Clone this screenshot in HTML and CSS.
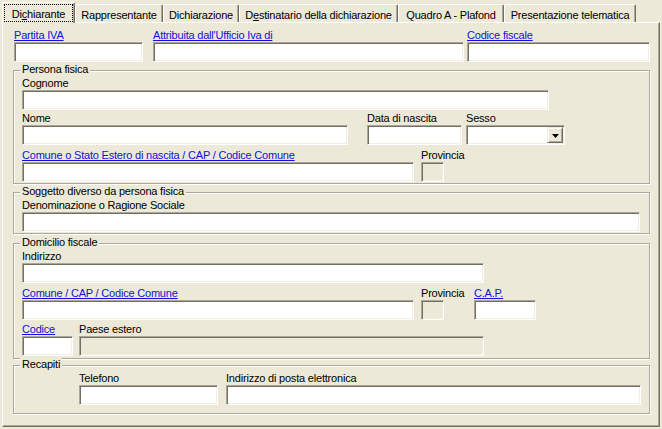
FILE: index.html
```html
<!DOCTYPE html>
<html lang="it">
<head>
<meta charset="utf-8">
<title>Dichiarante</title>
<link rel="stylesheet" href="styles.css">
</head>
<body>
<div class="tabs">
  <div class="tab sel t1"><span class="focus">Di<u>c</u>hiarante</span></div>
  <div class="tab t2">Rappresentante</div>
  <div class="tab t3">Dichiarazione</div>
  <div class="tab t4">D<u>e</u>stinatario della dichiarazione</div>
  <div class="tab t5">Quadro A - Plafond</div>
  <div class="tab t6">Presentazione telematica</div>
</div>
<div class="panel">
  <div class="row top-row">
    <div class="field w-piva"><span class="lbl link">Partita IVA</span><div class="inp"></div></div>
    <div class="field w-uff"><span class="lbl link">Attribuita dall'Ufficio Iva di</span><div class="inp"></div></div>
    <div class="field w-cf"><span class="lbl link">Codice fiscale</span><div class="inp"></div></div>
  </div>

  <div class="group g-pf">
    <span class="legend">Persona fisica</span>
    <div class="row">
      <div class="field w-cognome"><span class="lbl">Cognome</span><div class="inp"></div></div>
    </div>
    <div class="row gap1">
      <div class="field w-nome"><span class="lbl">Nome</span><div class="inp"></div></div>
      <div class="field w-data"><span class="lbl">Data di nascita</span><div class="inp"></div></div>
      <div class="field w-sesso"><span class="lbl">Sesso</span>
        <div class="inp combo"><span class="combo-btn"><svg width="7" height="4" viewBox="0 0 7 4"><polygon points="0,0 7,0 3.5,4" fill="#000"/></svg></span></div>
      </div>
    </div>
    <div class="row gap3">
      <div class="field w-comune"><span class="lbl link">Comune o Stato Estero di nascita / CAP / Codice Comune</span><div class="inp"></div></div>
      <div class="field w-prov"><span class="lbl">Provincia</span><div class="inp dis"></div></div>
    </div>
  </div>

  <div class="group g-sd">
    <span class="legend">Soggetto diverso da persona fisica</span>
    <div class="row">
      <div class="field w-den"><span class="lbl">Denominazione o Ragione Sociale</span><div class="inp"></div></div>
    </div>
  </div>

  <div class="group g-df">
    <span class="legend">Domicilio fiscale</span>
    <div class="row">
      <div class="field w-ind"><span class="lbl">Indirizzo</span><div class="inp"></div></div>
    </div>
    <div class="row gap3">
      <div class="field w-comune"><span class="lbl link">Comune / CAP / Codice Comune</span><div class="inp"></div></div>
      <div class="field w-prov"><span class="lbl">Provincia</span><div class="inp dis"></div></div>
      <div class="field w-cap"><span class="lbl link">C.A.P.</span><div class="inp"></div></div>
    </div>
    <div class="row gap2">
      <div class="field w-cod"><span class="lbl link">Codice</span><div class="inp"></div></div>
      <div class="field w-paese"><span class="lbl">Paese estero</span><div class="inp dis"></div></div>
    </div>
  </div>

  <div class="group g-rec">
    <span class="legend">Recapiti</span>
    <div class="row">
      <div class="field w-tel"><span class="lbl">Telefono</span><div class="inp"></div></div>
      <div class="field w-mail"><span class="lbl">Indirizzo di posta elettronica</span><div class="inp"></div></div>
    </div>
  </div>
</div>
</body>
</html>
```

FILE: styles.css
```css
* { box-sizing: border-box; }

html, body {
  margin: 0;
  padding: 0;
  background: #ece9d8;
}

body {
  width: 662px;
  height: 429px;
  overflow: hidden;
  font-family: "Liberation Sans", Arial, sans-serif;
  font-size: 11px;
  letter-spacing: -0.2px;
  color: #000;
}

/* ---------- tabs ---------- */
.tabs {
  display: flex;
  align-items: flex-end;
  height: 22px;
  padding-left: 2px;
}

.tab {
  height: 18px;
  padding-top: 3px;
  line-height: 14px;
  text-align: center;
  white-space: nowrap;
  border-top: 1px solid #fff;
  border-left: 1px solid #fff;
  border-right: 1px solid #716f64;
  box-shadow: inset -1px 0 0 #aca899;
  border-radius: 2px 2px 0 0;
  background: #ece9d8;
}

.tab.sel {
  position: relative;
  z-index: 1;
  height: 21px;
  padding: 1px 1px 0 1px;
  margin-bottom: -1px;
}

.focus {
  display: block;
  height: 18px;
  padding-top: 3px;
  line-height: 13px;
  border: 1px dotted #000;
}

.t1 { width: 73px; }
.t2 { width: 88px; }
.t3 { width: 76px; }
.t4 { width: 159px; }
.t5 { width: 106px; }
.t6 { width: 132px; }

/* ---------- panel ---------- */
.panel {
  margin-left: 2px;
  width: 658px;
  height: 405px;
  padding: 5px 0 0 11px;
  border-top: 1px solid #fff;
  border-left: 1px solid #fff;
  border-right: 1px solid #716f64;
  border-bottom: 1px solid #716f64;
  box-shadow: inset -1px -1px 0 #aca899;
}

.row {
  display: flex;
  align-items: flex-start;
}
.gap1 { margin-top: 1px; }
.gap2 { margin-top: 2px; }
.gap3 { margin-top: 3px; }

.field {
  display: flex;
  flex-direction: column;
  flex: none;
}

.lbl {
  display: block;
  height: 14px;
  line-height: 14px;
  white-space: nowrap;
}

.link {
  color: #1010e0;
  text-decoration: underline;
}

.inp {
  height: 20px;
  background: #fff;
  border: 1px solid;
  border-color: #aca899 #fff #fff #aca899;
  box-shadow: inset 1px 1px 0 #716f64, inset -1px -1px 0 #f1efe2;
}
.inp.dis { background: #ece9d8; }

.combo {
  display: flex;
  justify-content: flex-end;
  padding: 1px;
}
.combo-btn {
  width: 16px;
  height: 16px;
  display: flex;
  align-items: center;
  justify-content: center;
  background: #ece9d8;
  border: 1px solid;
  border-color: #f1efe2 #716f64 #716f64 #f1efe2;
  box-shadow: inset 1px 1px 0 #fff, inset -1px -1px 0 #aca899;
}
.combo-btn svg { display: block; margin-top: 1px; }

/* ---------- group boxes ---------- */
.group {
  position: relative;
  margin-left: -1px;
  width: 637px;
  padding: 5px 0 1px 8px;
  border: 1px solid #aca899;
  box-shadow: inset 1px 1px 0 #fff, 1px 1px 0 #fff;
}

.legend {
  position: absolute;
  top: -8px;
  left: 6px;
  padding: 0 2px;
  line-height: 13px;
  background: #ece9d8;
  white-space: nowrap;
}

.g-pf { margin-top: 8px; }
.g-sd { margin-top: 8px; }
.g-df { margin-top: 9px; padding-bottom: 2px; }
.g-rec { margin-top: 6px; padding-bottom: 8px; }

/* ---------- field widths ---------- */
.w-piva { width: 129px; }
.w-uff { width: 311px; margin-left: 10px; }
.w-cf { width: 183px; margin-left: 3px; }

.w-cognome { width: 527px; }
.w-nome { width: 326px; }
.w-data { width: 95px; margin-left: 19px; }
.w-sesso { width: 99px; margin-left: 4px; }
.w-comune { width: 392px; }
.w-prov { width: 23px; margin-left: 7px; }

.w-den { width: 618px; }

.w-ind { width: 462px; }
.w-cap { width: 62px; margin-left: 30px; }
.w-cod { width: 51px; }
.w-paese { width: 405px; margin-left: 6px; }

.w-tel { width: 139px; margin-left: 57px; }
.w-mail { width: 415px; margin-left: 8px; }
```
